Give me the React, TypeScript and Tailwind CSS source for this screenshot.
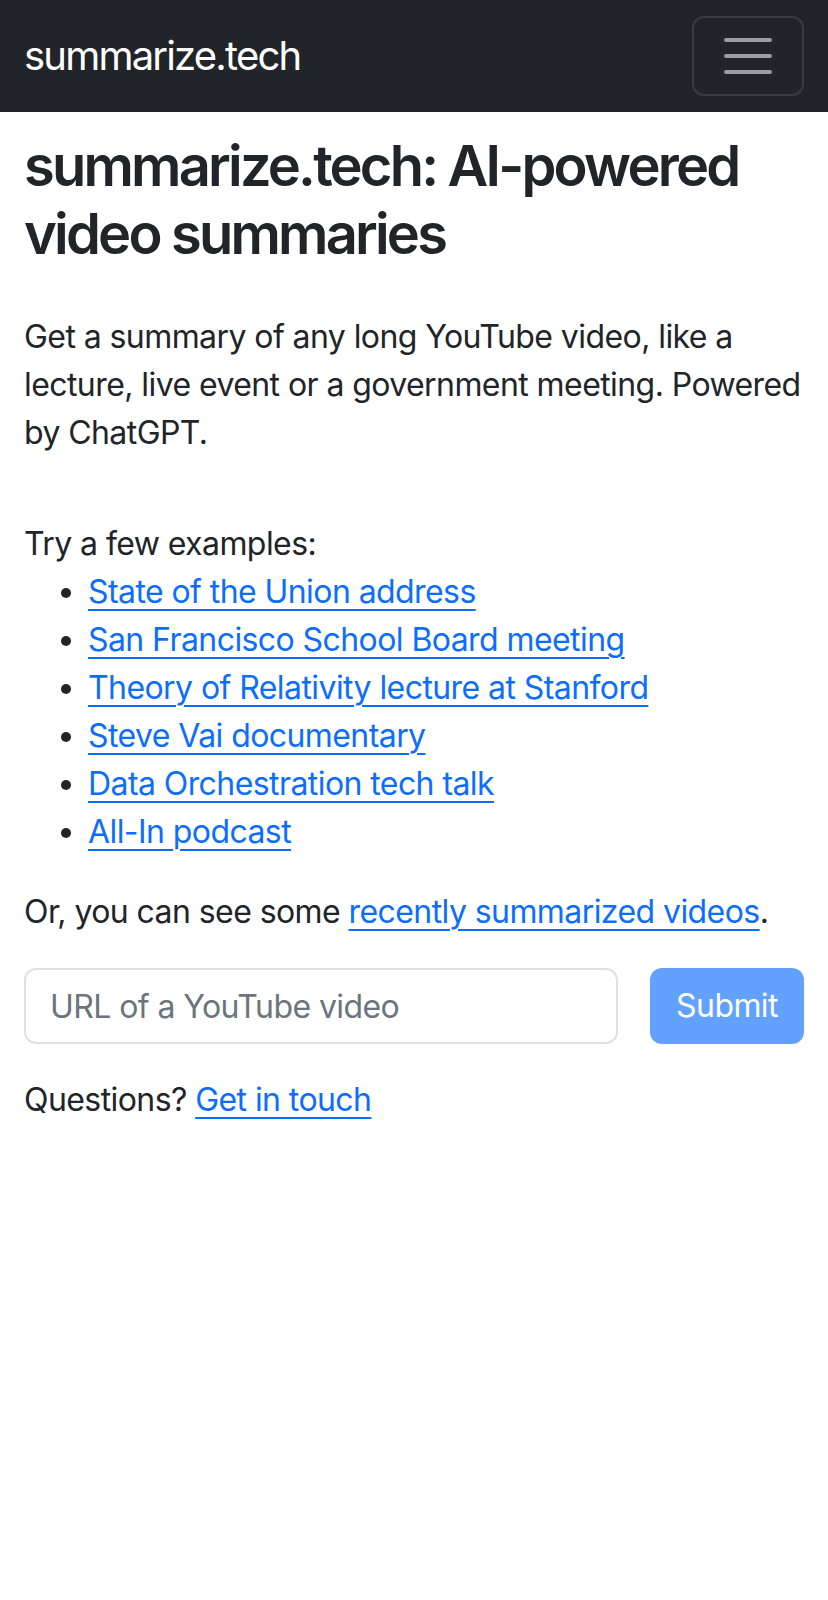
import React from "react";

const examples = [
  "State of the Union address",
  "San Francisco School Board meeting",
  "Theory of Relativity lecture at Stanford",
  "Steve Vai documentary",
  "Data Orchestration tech talk",
  "All-In podcast",
];

const linkCls = "text-[#0d6efd] underline underline-offset-[6px] decoration-2";

export default function App() {
  return (
    <div className="min-h-[1600px] bg-white text-[#212529] font-['Inter',sans-serif] tracking-[-0.036em]">
      {/* navbar */}
      <nav className="flex items-center justify-between bg-[#212529] px-6 py-4">
        <a href="#" className="py-[10px] text-[40px] leading-[60px] tracking-[-0.045em] text-white">
          summarize.tech
        </a>
        <button className="flex h-[80px] w-[112px] items-center justify-center rounded-xl border-2 border-white/10">
          <span className="flex w-[48px] flex-col gap-[12px]">
            <span className="h-[4px] rounded-full bg-white/55" />
            <span className="h-[4px] rounded-full bg-white/55" />
            <span className="h-[4px] rounded-full bg-white/55" />
          </span>
        </button>
      </nav>

      <main className="px-6 pt-[21px]">
        <h1 className="text-[56px] font-semibold leading-[67.5px] tracking-[-0.05em]">
          summarize.tech: AI-powered video summaries
        </h1>

        <p className="mt-[45px] text-[32px] leading-[48px]">
          Get a summary of any long YouTube video, like a lecture, live event or a
          government meeting. Powered by ChatGPT.
        </p>

        <p className="mt-[63px] text-[32px] leading-[48px]">Try a few examples:</p>
        <ul className="list-disc pl-16 text-[32px] leading-[48px]">
          {examples.map((e) => (
            <li key={e}>
              <a href="#" className={linkCls}>
                {e}
              </a>
            </li>
          ))}
        </ul>

        <p className="mt-8 text-[32px] leading-[48px]">
          Or, you can see some{" "}
          <a href="#" className={linkCls}>
            recently summarized videos
          </a>
          .
        </p>

        {/* form */}
        <form className="mt-8 flex gap-8">
          <input
            type="text"
            placeholder="URL of a YouTube video"
            className="h-[76px] min-w-0 flex-1 rounded-xl border-2 border-[#dee2e6] px-6 text-[32px] text-[#212529] placeholder:text-[#6c757d] outline-none"
          />
          <button
            type="submit"
            disabled
            className="h-[76px] w-[154px] rounded-xl bg-[#62a1fe] text-[32px] text-white"
          >
            Submit
          </button>
        </form>

        <p className="mt-8 text-[32px] leading-[48px]">
          Questions?{" "}
          <a href="#" className={linkCls}>
            Get in touch
          </a>
        </p>
      </main>
    </div>
  );
}
